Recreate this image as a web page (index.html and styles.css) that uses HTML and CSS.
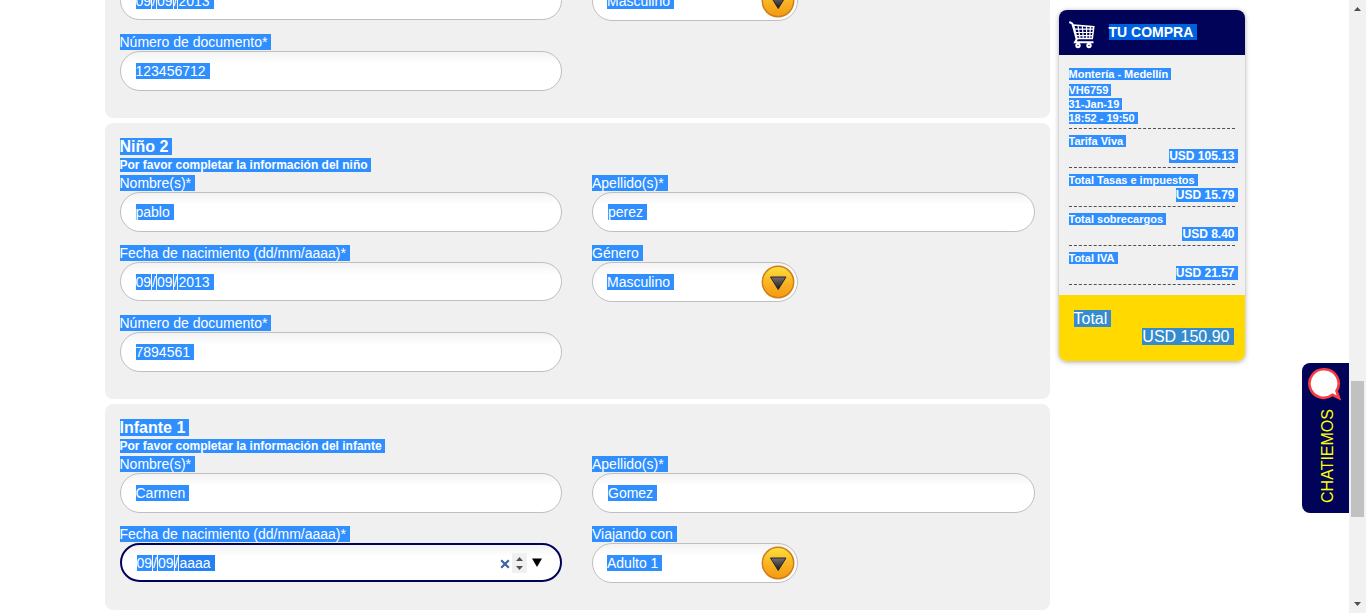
FILE: index.html
```html
<!DOCTYPE html>
<html lang="es">
<head>
<meta charset="utf-8">
<meta name="viewport" content="width=device-width, initial-scale=1">
<title>Información de pasajeros</title>
<link rel="stylesheet" href="styles.css">
</head>
<body>
<svg class="defs" aria-hidden="true">
  <defs>
    <linearGradient id="gold" x1="0" y1="0" x2="0" y2="1"><stop offset="0" stop-color="#fbe03c"/><stop offset=".6" stop-color="#f9ae20"/><stop offset="1" stop-color="#f39a14"/></linearGradient>
    <linearGradient id="dark" x1="0" y1="0" x2="0" y2="1"><stop offset="0" stop-color="#77706f"/><stop offset="1" stop-color="#17191d"/></linearGradient>
    <symbol id="drop" viewBox="0 0 34 34">
      <circle cx="17" cy="17" r="15.7" fill="url(#gold)" stroke="#cf7d17" stroke-width="1.5"/>
      <path d="M9.500 12h15.500l-7.800 12.500z" fill="url(#dark)" stroke="#22242a" stroke-width="1"/>
    </symbol>
  </defs>
</svg>

<div class="page">
  <main class="passengers">
    <form class="card card-clipped">
      <div class="fields">
        <div class="field">
          <div class="control control-date" role="group" aria-label="Fecha de nacimiento">
            <span class="date"><input class="value" aria-label="Día" size="2" value="09"><span class="value">/</span><input class="value" aria-label="Mes" size="2" value="09"><span class="value">/</span><input class="value last" aria-label="Año" size="4" value="2013"></span>
          </div>
        </div>
        <div class="field">
          <div class="control select">
            <select class="value last" aria-label="Género"><option>Masculino</option></select>
            <svg class="drop"><use href="#drop"/></svg>
          </div>
        </div>
        <div class="field">
          <label for="doc1"><span class="sel">Número de documento*</span></label>
          <div class="control"><input class="value last" id="doc1" size="9" value="123456712"></div>
        </div>
      </div>
    </form>

    <form class="card">
      <h2><span class="sel">Niño 2</span></h2>
      <p class="hint"><span class="sel">Por favor completar la información del niño</span></p>
      <div class="fields">
        <div class="field">
          <label for="name2"><span class="sel">Nombre(s)*</span></label>
          <div class="control"><input class="value last" id="name2" size="5" value="pablo"></div>
        </div>
        <div class="field">
          <label for="surname2"><span class="sel">Apellido(s)*</span></label>
          <div class="control"><input class="value last" id="surname2" size="5" value="perez"></div>
        </div>
        <div class="field">
          <label for="day2"><span class="sel">Fecha de nacimiento (dd/mm/aaaa)*</span></label>
          <div class="control control-date">
            <span class="date"><input class="value" id="day2" size="2" value="09"><span class="value">/</span><input class="value" aria-label="Mes" size="2" value="09"><span class="value">/</span><input class="value last" aria-label="Año" size="4" value="2013"></span>
          </div>
        </div>
        <div class="field">
          <label for="gender2"><span class="sel">Género</span></label>
          <div class="control select">
            <select class="value last" id="gender2"><option>Masculino</option></select>
            <svg class="drop"><use href="#drop"/></svg>
          </div>
        </div>
        <div class="field">
          <label for="doc2"><span class="sel">Número de documento*</span></label>
          <div class="control"><input class="value last" id="doc2" size="7" value="7894561"></div>
        </div>
      </div>
    </form>

    <form class="card">
      <h2><span class="sel">Infante 1</span></h2>
      <p class="hint"><span class="sel">Por favor completar la información del infante</span></p>
      <div class="fields">
        <div class="field">
          <label for="name3"><span class="sel">Nombre(s)*</span></label>
          <div class="control"><input class="value last" id="name3" size="6" value="Carmen"></div>
        </div>
        <div class="field">
          <label for="surname3"><span class="sel">Apellido(s)*</span></label>
          <div class="control"><input class="value last" id="surname3" size="5" value="Gomez"></div>
        </div>
        <div class="field">
          <label for="day3"><span class="sel">Fecha de nacimiento (dd/mm/aaaa)*</span></label>
          <div class="control control-date focused">
            <span class="date"><input class="value" id="day3" size="2" value="09"><span class="value">/</span><input class="value" aria-label="Mes" size="2" value="09"><span class="value">/</span><input class="value last active" aria-label="Año" size="4" value="aaaa"></span>
            <span class="date-tools">
              <button type="button" class="clear" aria-label="Borrar"><svg width="10" height="10" viewBox="0 0 10 10"><path d="M1.200 1.200l7.600 7.600M8.800 1.200L1.200 8.800" stroke="#3b66a5" stroke-width="2.2"/></svg></button>
              <button type="button" class="spin" aria-label="Cambiar valor"><svg width="15" height="20" viewBox="0 0 15 20"><path d="M4 8l3.500-4L11 8zM4 13l3.500 4L11 13z" fill="#505050"/></svg></button>
              <button type="button" aria-label="Abrir calendario"><svg width="10" height="20" viewBox="0 0 10 20"><path d="M0 5.500h10L5 14z" fill="#000"/></svg></button>
            </span>
          </div>
        </div>
        <div class="field">
          <label for="with3"><span class="sel">Viajando con</span></label>
          <div class="control select">
            <select class="value last" id="with3"><option>Adulto 1</option></select>
            <svg class="drop"><use href="#drop"/></svg>
          </div>
        </div>
      </div>
    </form>
  </main>

  <aside class="cart">
    <header class="cart-head">
      <svg width="28" height="28" viewBox="0 0 28 28" fill="none" stroke="#fff">
        <path d="M0.300 1L3.300 2.600 7.600 18" stroke-width="2"/>
        <path d="M8 17.700l-2 3.600h18.500" stroke-width="2"/>
        <path d="M4.500 4L24.800 5.800 23.300 17.500H7.800z" stroke-width="1.500"/>
        <path d="M5 8.200h19.500M6 11.500h18M7 14.700h16.700" stroke-width="1.200"/>
        <path d="M9 4.500l2 13M13.300 4.800l1 12.700M17.500 5.200l.2 12.300M21.400 5.500l-.7 12" stroke-width="1.200"/>
        <circle cx="9" cy="24.500" r="1.700" stroke-width="2"/><circle cx="20" cy="24.500" r="1.700" stroke-width="2"/>
      </svg>
      <h2><span class="sel sel-navy">TU COMPRA</span></h2>
    </header>
    <div class="cart-body">
      <div class="flight">
        <p class="route"><span class="sel">Montería - Medellín</span></p>
        <p><span class="sel">VH6759</span></p>
        <p><span class="sel">31-Jan-19</span></p>
        <p><span class="sel">18:52 - 19:50</span></p>
      </div>
      <dl>
        <div class="item"><dt><span class="sel">Tarifa Viva</span></dt><dd><span class="sel">USD 105.13</span></dd></div>
        <div class="item"><dt><span class="sel">Total Tasas e impuestos</span></dt><dd><span class="sel">USD 15.79</span></dd></div>
        <div class="item"><dt><span class="sel">Total sobrecargos</span></dt><dd><span class="sel">USD 8.40</span></dd></div>
        <div class="item"><dt><span class="sel">Total IVA</span></dt><dd><span class="sel">USD 21.57</span></dd></div>
      </dl>
    </div>
    <div class="cart-total">
      <p><span class="sel sel-gold">Total</span></p>
      <p class="sum"><span class="sel sel-gold">USD 150.90</span></p>
    </div>
  </aside>
</div>

<button type="button" class="chat">
  <svg width="34" height="34" viewBox="0 0 34 34"><path d="M17 2.200a14.300 14.300 0 1 0 8.500 25.600L32 31l-2.500-7A14.300 14.300 0 0 0 17 2.200z" fill="#fff" stroke="#fb3c41" stroke-width="2.600"/></svg>
  <span>CHATIEMOS</span>
</button>

<div class="scrollbar" aria-hidden="true">
  <svg width="17" height="17" viewBox="0 0 17 17"><path d="M5 11l3.500-4 3.500 4z" fill="#505050"/></svg>
  <div class="track"><div class="thumb"></div></div>
  <svg width="17" height="17" viewBox="0 0 17 17"><path d="M5 6l3.500 4L12 6z" fill="#505050"/></svg>
</div>
</body>
</html>
```
FILE: styles.css
```css
* {
  box-sizing: border-box;
}

body {
  margin: 0;
  height: 100vh;
  overflow: hidden;
  padding-right: 17px;
  background: #fff;
  color: #fff;
  font: 14px/17px "Liberation Sans", Arial, sans-serif;
}

h2, p, dl, dd {
  margin: 0;
}

.defs {
  position: absolute;
  width: 0;
  height: 0;
}

.sel {
  padding-right: 4px;
  background: #308fff;
}

.sel-navy {
  background: #0061df;
}

.sel-gold {
  background: #348bce;
}

.page {
  display: grid;
  grid-template-columns: 1fr 186px;
  gap: 9px;
  align-items: start;
  max-width: 1140px;
  margin: 0 auto;
}

/* passenger cards */

.passengers {
  display: grid;
  gap: 5px;
}

.card {
  padding: 15px 15px 14px;
  border-radius: 8px;
  background: #f0f0f0;
}

.card-clipped {
  margin-top: -19px;
  padding-top: 0;
}

.card h2 {
  font-size: 16px;
  line-height: 18px;
}

.hint {
  margin-bottom: 1px;
  font-size: 12px;
  font-weight: bold;
  line-height: 18px;
}

.hint .sel {
  padding-right: 3px;
}

.fields {
  display: grid;
  grid-template-columns: 1fr 1fr;
  column-gap: 30px;
}

.field {
  margin-bottom: 13px;
}

.field label {
  display: block;
}

.control {
  display: flex;
  align-items: center;
  justify-content: space-between;
  height: 40px;
  padding: 0 15px;
  border: 1px solid #bfbfbf;
  border-radius: 20px;
  background: linear-gradient(#f3f3f3, #fff 12px);
}

.control-date {
  height: 39px;
}

.control.focused {
  border: 2px solid #000358;
}

.control.select {
  width: 206px;
  padding: 0 2px 0 14px;
}

.value {
  field-sizing: content;
  flex: none;
  height: 16px;
  margin: 0;
  padding: 0;
  border: 0;
  border-radius: 0;
  outline: 0;
  appearance: none;
  background: #308fff;
  color: #fff;
  font: inherit;
  line-height: 16px;
}

.value.last {
  padding-right: 4px;
}

.value.active {
  background: #2480f5;
}

.date {
  display: flex;
  gap: 1px;
}

.drop {
  width: 34px;
  height: 34px;
}

.date-tools {
  display: flex;
  align-items: center;
  gap: 5px;
  margin-right: 3px;
}

.date-tools button {
  display: flex;
  padding: 0;
  border: 0;
  background: none;
}

.date-tools .clear {
  padding-top: 2px;
}

.date-tools .spin {
  margin-left: -3px;
  background: #f0f0f0;
}

/* purchase summary */

.cart {
  margin-top: 10px;
  border-radius: 8px;
  overflow: hidden;
  background: #f0f0f0;
  box-shadow: 0 1px 5px rgba(0, 0, 0, .35);
}

.cart-head {
  display: flex;
  align-items: center;
  gap: 12px;
  height: 45px;
  padding: 0 10px;
  background: #000358;
}

.cart-head svg {
  margin-top: 4px;
}

.cart-head h2 {
  font-size: 14px;
}

.cart-body {
  padding: 12px 10px 10px;
  font-size: 11px;
  font-weight: bold;
  line-height: 14px;
}

.cart-body .sel {
  padding-right: 3px;
}

.flight,
.item {
  border-bottom: 1px dashed #505050;
}

.flight {
  padding-bottom: 3px;
}

.route {
  margin-bottom: 2px;
}

.item {
  padding: 5px 0 3px;
}

.item dd {
  margin-top: 1px;
  margin-right: -3px;
  font-size: 12px;
  line-height: 15px;
  text-align: right;
}

.cart-total {
  padding: 15px 11px 15px 15px;
  background: #ffd900;
  font-size: 16px;
  line-height: 18px;
}

.sum {
  text-align: right;
}

/* chat tab */

.chat {
  position: fixed;
  top: 363px;
  right: 17px;
  display: flex;
  flex-direction: column;
  align-items: center;
  gap: 8px;
  width: 47px;
  height: 150px;
  padding: 4px 4px 8px 0;
  border: 0;
  border-radius: 8px 0 0 8px;
  background: #000358;
  color: #ff0;
  font: 16px/20px "Liberation Sans", Arial, sans-serif;
}

.chat svg {
  flex: none;
}

.chat span {
  margin-left: 8px;
  writing-mode: vertical-rl;
  transform: rotate(180deg);
}

/* page scrollbar */

.scrollbar {
  position: fixed;
  top: 0;
  right: 0;
  bottom: 0;
  display: flex;
  flex-direction: column;
  width: 17px;
  background: #f1f1f1;
}

.track {
  position: relative;
  flex: 1;
}

.thumb {
  position: absolute;
  top: 62.8%;
  right: 2px;
  left: 2px;
  height: 23.5%;
  background: #c1c1c1;
}
```
